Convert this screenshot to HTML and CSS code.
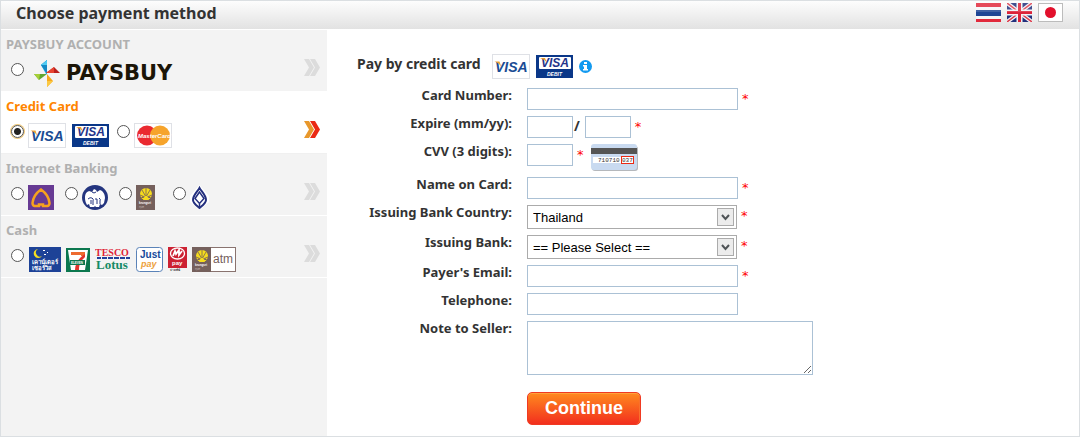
FILE: index.html
```html
<!DOCTYPE html>
<html lang="en">
<head>
  <meta charset="UTF-8">
  <title>Choose payment method</title>
  <link rel="stylesheet" href="styles.css">
</head>
<body>
  <!-- shared logos -->
  <svg class="defs" width="0" height="0" aria-hidden="true">
    <symbol id="visa" viewBox="0 0 38 25">
      <rect x=".5" y=".5" width="37" height="24" fill="#fff" stroke="#dfe1e6"/>
      <text x="3" y="18" class="visa-text" font-size="14" fill="#1a4c94">VISA</text>
      <path d="M2.500 7.500h5l2 6q-2-4.500-7-6z" fill="#eba131"/>
    </symbol>
    <symbol id="visa-debit" viewBox="0 0 37 23">
      <rect width="37" height="23" fill="#0a3788"/>
      <rect x="3" y="2" width="32" height="12" rx="1" fill="#fff"/>
      <text x="5" y="12" class="visa-text" font-size="12" fill="#24348a">VISA</text>
      <path d="M4 3h5l2 5q-2-3.500-7-5z" fill="#eba131"/>
      <text x="11" y="21" class="visa-text" font-size="5" fill="#fff">DEBIT</text>
    </symbol>
    <symbol id="krungsri" viewBox="0 0 19 25">
      <rect width="19" height="25" fill="#75605c"/>
      <circle cx="10" cy="9" r="6" fill="#f6dc1c"/>
      <path d="M10 3v8M6 5l4 7 4-7M4 10l5 2M16 10l-5 2" stroke="#75605c" stroke-width=".8" fill="none"/>
      <path d="M5 13l2-2 1 2zM15 13l-2-2-1 2z" fill="#75605c"/>
      <path d="M9 11h2l2 4H7z" fill="#f6dc1c"/>
      <text x="3" y="19" font-size="3" font-weight="bold" fill="#fff">krungsri</text>
      <text x="3" y="23" font-size="2" fill="#cbbfbb">กรุงศรี</text>
    </symbol>
    <symbol id="arrows" viewBox="0 0 16 17">
      <path class="arrow-back" d="M0 0h5l5 8.500-5 8.500H0l5-8.500z"/>
      <path class="arrow-front" d="M6 0h5l5 8.500-5 8.500H6l5-8.500z"/>
    </symbol>
    <symbol id="drop" viewBox="0 0 17 18">
      <rect x=".5" y=".5" width="16" height="17" fill="#ececec" stroke="#ababab"/>
      <path d="M5 7l3.500 4L12 7" fill="none" stroke="#4f5457" stroke-width="2"/>
    </symbol>
  </svg>

  <div class="page">
    <header class="header">
      <h1>Choose payment method</h1>
      <nav class="flags">
        <a href="#th" aria-label="Thai">
          <svg width="25" height="19" viewBox="0 0 25 19">
            <rect width="25" height="19" fill="#e12a3c"/>
            <rect y="4" width="25" height="12" fill="#f5f5f8"/>
            <rect y="7" width="25" height="6" fill="#1e4595"/>
            <rect width="25" height="9" fill="#fff" opacity=".15"/>
          </svg>
        </a>
        <a href="#en" aria-label="English">
          <svg width="25" height="19" viewBox="0 0 25 19">
            <rect width="25" height="19" fill="#23317c"/>
            <path d="M0 0l25 19M25 0L0 19" stroke="#f2f2f6" stroke-width="4"/>
            <path d="M0 0l25 19M25 0L0 19" stroke="#dd3c4c" stroke-width="1.500"/>
            <path d="M12.500 0v19M0 9.500h25" stroke="#f2f2f6" stroke-width="6"/>
            <path d="M12.500 0v19M0 9.500h25" stroke="#dc2338" stroke-width="3"/>
            <rect width="25" height="9" fill="#fff" opacity=".15"/>
          </svg>
        </a>
        <a href="#jp" aria-label="Japanese">
          <svg width="25" height="19" viewBox="0 0 25 19">
            <rect x=".5" y=".5" width="24" height="18" fill="#fff" stroke="#bcbcbc"/>
            <circle cx="12.500" cy="9.500" r="5.500" fill="#e2102c"/>
          </svg>
        </a>
      </nav>
    </header>

    <form class="content">
      <aside class="methods">
        <section class="method">
          <h2>PAYSBUY ACCOUNT</h2>
          <div class="options">
            <label class="option">
              <input type="radio" name="method" value="paysbuy" aria-label="PAYSBUY">
              <svg width="152" height="30" viewBox="0 0 152 30">
                <g transform="translate(3 0)">
                  <path d="M10 6l6-5v14h-1z" fill="#27b4e8"/>
                  <path d="M16 1v14l-6-9z" fill="#1488c4"/>
                  <path d="M10 6l6-5v5z" fill="#4fcaf2"/>
                  <path d="M15 14h14l-6-6z" fill="#b91f1d"/>
                  <path d="M15 14l8-6v6z" fill="#e8432f"/>
                  <path d="M3 15h13l-8 6z" fill="#5fa62f"/>
                  <path d="M3 15h6l-1 6z" fill="#a6cf38"/>
                  <path d="M16 15l6 7-6 6z" fill="#f6a81c"/>
                  <path d="M16 22h6l-6 6z" fill="#fbc841"/>
                </g>
                <text x="38" y="21" font-family="DejaVu Sans" font-size="21" font-weight="bold" fill="#1b1507">PAYSBUY</text>
              </svg>
            </label>
          </div>
          <svg class="arrows"><use href="#arrows"/></svg>
        </section>

        <section class="method active">
          <h2>Credit Card</h2>
          <div class="options">
            <label class="option">
              <input type="radio" name="method" value="visa" aria-label="Visa" checked>
              <svg width="38" height="25"><use href="#visa"/></svg>
              <svg class="debit" width="37" height="23"><use href="#visa-debit"/></svg>
            </label>
            <label class="option">
              <input type="radio" name="method" value="mastercard" aria-label="MasterCard">
              <svg width="38" height="25" viewBox="0 0 38 25">
                <rect x=".5" y=".5" width="37" height="24" fill="#fff" stroke="#dfe1e6"/>
                <circle cx="13" cy="12.500" r="10" fill="#ea2a31"/>
                <circle cx="26" cy="12.500" r="10" fill="#f6a42c"/>
                <text x="4" y="15" font-size="6" font-weight="bold" font-style="italic" fill="#fff">MasterCard</text>
              </svg>
            </label>
          </div>
          <svg class="arrows"><use href="#arrows"/></svg>
        </section>

        <section class="method">
          <h2>Internet Banking</h2>
          <div class="options banks">
            <label class="option">
              <input type="radio" name="method" value="scb" aria-label="Siam Commercial Bank">
              <svg width="26" height="25" viewBox="0 0 26 25">
                <rect width="26" height="25" fill="#673a93"/>
                <path d="M13 4.500C8 8 5 13 4.500 18q0 2.500 2 3H11v-1.500h4V21h4.500q2-.500 2-3C21 13 18 8 13 4.500z" fill="none" stroke="#f6a21e" stroke-width="2.500"/>
              </svg>
            </label>
            <label class="option">
              <input type="radio" name="method" value="ktb" aria-label="Krung Thai Bank">
              <svg width="26" height="25" viewBox="0 0 26 25">
                <ellipse cx="13" cy="12.500" rx="13" ry="12.500" fill="#24357f"/>
                <path d="M3 13c0-5 2-6 4-7l3 1 2-3 2 1 1 2 3-2c3 1 5 4 5 8l-1 5-2 2-2-1-1 3h-3l-1-1-1 1H8l-1-3-2 1c-1-2-2-4-2-7z" fill="#fff"/>
                <path d="M6 14q2-2 4-1t1 3v4M9 15v4M13 14h2v5M17 13q2 1 1 3v3M10 7l2 1 2-1" stroke="#24357f" stroke-width="1" fill="none"/>
              </svg>
            </label>
            <label class="option">
              <input type="radio" name="method" value="bay" aria-label="Krungsri">
              <svg width="19" height="25"><use href="#krungsri"/></svg>
            </label>
            <label class="option">
              <input type="radio" name="method" value="bbl" aria-label="Bangkok Bank">
              <svg width="19" height="25" viewBox="0 0 19 25">
                <path d="M9.500 0L0 11v6l9.500 8 9.500-8v-6z" fill="#fff"/>
                <path d="M9.500 3C8 6 3 10 3 15c0 3 3 5 6.500 8 3.500-3 6.500-5 6.500-8 0-5-5-9-6.500-12z" fill="none" stroke="#24307f" stroke-width="2"/>
                <path d="M9.500 7L5 13.500l4.500 5 4.500-5zM9.500 18v4" fill="none" stroke="#24307f" stroke-width="1.500"/>
              </svg>
            </label>
          </div>
          <svg class="arrows"><use href="#arrows"/></svg>
        </section>

        <section class="method">
          <h2>Cash</h2>
          <div class="options">
            <label class="option cash">
              <input type="radio" name="method" value="cash" aria-label="Cash">
              <svg width="32" height="25" viewBox="0 0 32 25">
                <rect width="32" height="25" fill="#1d4297"/>
                <path d="M9 2a4.500 4.500 0 1 0 4 7 4 4 0 0 1-4-7z" fill="#f8e01e"/>
                <path d="M14 3h2v1h-2zM15 7h2v1h-2zM18 5h1v1h-1z" fill="#fff"/>
                <text x="3" y="17" font-size="6" font-weight="bold" fill="#fff">เคาน์เตอร์</text>
                <text x="3" y="23" font-size="6" font-weight="bold" fill="#fff">เซอร์วิส</text>
              </svg>
              <svg width="24" height="25" viewBox="0 0 24 25">
                <rect y="1" width="24" height="24" fill="#0b774e"/>
                <path d="M2 3h20l-3 20H5z" fill="#fff"/>
                <path d="M5 5h14v4h-4V8H5z" fill="#ee6b31"/>
                <path d="M19 7v3c-3 3-6 6-6 13H9c0-5 2-9 6-13z" fill="#e2332d"/>
                <rect x="4" y="13" width="15" height="5" fill="#0b774e"/>
                <text x="5" y="17" font-size="3" font-weight="bold" fill="#fff">ELEVEN</text>
              </svg>
              <svg width="36" height="25" viewBox="0 0 36 25">
                <text x="0" y="9" font-family="Liberation Serif" font-size="10" font-weight="bold" fill="#df1f37">TESCO</text>
                <path d="M2 11h4m1 0h5m1 0h5m1 0h5m1 0h5m1 0h4" stroke="#23409a" stroke-width="2"/>
                <text x="1" y="22" font-family="Liberation Serif" font-size="13" font-weight="bold" fill="#168b67">Lotus</text>
              </svg>
              <svg width="27" height="25" viewBox="0 0 27 25">
                <rect x=".5" y=".5" width="26" height="24" rx="3" fill="#fff" stroke="#5b83b8"/>
                <text x="4" y="11" font-size="10" font-weight="bold" fill="#164a9b">Just</text>
                <text x="5" y="20" font-size="9" font-weight="bold" font-style="italic" fill="#eda13c">pay</text>
              </svg>
              <svg width="19" height="25" viewBox="0 0 19 25">
                <rect width="19" height="21" fill="#cc2132"/>
                <ellipse cx="9.500" cy="6.500" rx="7" ry="5.500" fill="none" stroke="#fff" stroke-width="1.300"/>
                <path d="M5 9l2-5 1 3 3-4v5l3-4" fill="none" stroke="#fff" stroke-width="1.800"/>
                <text x="4" y="18" font-size="6" font-weight="bold" fill="#fff">pay</text>
                <text x="2" y="24" font-size="3" font-weight="bold" fill="#333">จ่ายที่นี่</text>
              </svg>
              <svg width="44" height="25" viewBox="0 0 44 25">
                <rect x=".5" y=".5" width="43" height="24" fill="#fff" stroke="#89736f"/>
                <use href="#krungsri" width="19" height="25"/>
                <text x="21" y="16" font-size="12" fill="#75605c">atm</text>
              </svg>
            </label>
          </div>
          <svg class="arrows"><use href="#arrows"/></svg>
        </section>
      </aside>

      <main class="payment">
        <div class="pay-title">
          <h2>Pay by credit card</h2>
          <svg width="38" height="25"><use href="#visa"/></svg>
          <svg width="37" height="23"><use href="#visa-debit"/></svg>
          <svg width="13" height="13" viewBox="0 0 13 13">
            <circle cx="6.500" cy="6.500" r="6.500" fill="#139af0"/>
            <path d="M5 2h3v2H5zM4 5h4v4h1v1.500H4V9h1V6.500H4z" fill="#fff"/>
          </svg>
        </div>

        <div class="fields">
          <label for="card">Card Number:</label>
          <div class="field"><input type="text" id="card"><span class="req">*</span></div>

          <label for="month">Expire (mm/yy):</label>
          <div class="field">
            <input type="text" id="month" class="short"><span class="slash">/</span><input type="text" class="short" aria-label="Expire year"><span class="req">*</span>
          </div>

          <label for="cvv">CVV (3 digits):</label>
          <div class="field">
            <input type="text" id="cvv" class="short"><span class="req">*</span>
            <svg class="cvv-card" width="48" height="27" viewBox="0 0 48 27">
              <rect x="1" y="2" width="46" height="25" rx="3" fill="#b5b8bc"/>
              <rect width="46" height="26" rx="3" fill="#c9daf0"/>
              <rect y="4" width="46" height="6" fill="#555"/>
              <rect x="2" y="13" width="41" height="6" fill="#fff"/>
              <text x="7" y="18" font-family="Liberation Mono" font-size="6" fill="#333">710710</text>
              <rect x="30.500" y="12.500" width="12" height="7" fill="#fff" stroke="#ea2a14"/>
              <text x="31" y="18" font-family="Liberation Mono" font-size="6" fill="#333">037</text>
            </svg>
          </div>

          <label for="name">Name on Card:</label>
          <div class="field"><input type="text" id="name"><span class="req">*</span></div>

          <label for="country">Issuing Bank Country:</label>
          <div class="field">
            <div class="select">
              <select id="country"><option>Thailand</option></select>
              <svg width="17" height="18"><use href="#drop"/></svg>
            </div>
            <span class="req">*</span>
          </div>

          <label for="bank">Issuing Bank:</label>
          <div class="field">
            <div class="select">
              <select id="bank"><option>== Please Select ==</option></select>
              <svg width="17" height="18"><use href="#drop"/></svg>
            </div>
            <span class="req">*</span>
          </div>

          <label for="email">Payer's Email:</label>
          <div class="field"><input type="text" id="email"><span class="req">*</span></div>

          <label for="phone">Telephone:</label>
          <div class="field"><input type="text" id="phone"></div>

          <label for="note">Note to Seller:</label>
          <div class="field"><textarea id="note"></textarea></div>

          <button type="button" class="continue">Continue</button>
        </div>
      </main>
    </form>
  </div>
</body>
</html>
```

FILE: styles.css
```css
* {
  box-sizing: border-box;
}

body {
  margin: 0;
  font-family: "Noto Sans", sans-serif;
  font-size: 13px;
  color: #333;
  background: #fff;
}

h1, h2 {
  margin: 0;
}

svg {
  display: block;
  flex: none;
  font-family: "Liberation Sans", sans-serif;
}

.defs {
  position: absolute;
}

.visa-text {
  font-weight: bold;
  font-style: italic;
}

.page {
  display: flex;
  flex-direction: column;
  min-height: 100vh;
  border: 1px solid #dbdfe2;
}

.header {
  display: flex;
  justify-content: space-between;
  height: 29px;
  padding: 0 16px 0 15px;
  border-bottom: 1px solid #fff;
  background: linear-gradient(#fdfdfd, #e2e2e2);
}

.header h1 {
  font-size: 16px;
  line-height: 24px;
}

.flags {
  display: flex;
  gap: 6px;
  padding-top: 2px;
}

.content {
  display: flex;
  flex: 1;
}

/* left menu */
.methods {
  width: 326px;
  flex: none;
  background: #f3f3f3;
}

.method {
  position: relative;
  padding: 6px 5px 5px;
  border-bottom: 1px solid #fff;
}

.method h2 {
  margin-bottom: 9px;
  font-size: 13px;
  line-height: 16px;
  color: #b0b0b0;
}

.method.active {
  background: #fff;
  border-color: #f0f0f0;
}

.method.active h2 {
  color: #ff8500;
}

.options {
  display: flex;
  gap: 8px;
  padding-left: 5px;
}

.option {
  display: flex;
  align-items: center;
  gap: 4px;
  height: 25px;
}

.banks {
  gap: 0;
}

.banks .option {
  width: 54px;
}

.cash {
  gap: 5px;
}

.debit {
  margin-left: 2px;
}

input[type="radio"] {
  appearance: none;
  flex: none;
  width: 13px;
  height: 13px;
  margin: 0 0 8px;
  border: 1px solid #555;
  border-radius: 50%;
  background: #fff;
}

input[type="radio"]:checked {
  background: radial-gradient(#222 3px, #fff 4px);
  box-shadow: 0 0 0 1px #f0c878;
}

.arrows {
  position: absolute;
  right: 7px;
  top: 29px;
  width: 16px;
  height: 17px;
  fill: #dcdcdc;
}

.active .arrows {
  --back: #e8982c;
  fill: #ea2a14;
}

.arrow-back {
  fill: var(--back, #dcdcdc);
}

/* card form */
.payment {
  flex: 1;
  padding: 24px 0 10px;
}

.pay-title {
  display: flex;
  align-items: center;
  gap: 6px;
  height: 25px;
  margin-bottom: 9px;
  padding-left: 30px;
}

.pay-title h2 {
  margin: 0 5px 5px 0;
  font-size: 14px;
  line-height: 20px;
}

.fields {
  display: grid;
  grid-template-columns: 185px 1fr;
  gap: 6px 15px;
}

.fields label {
  font-weight: bold;
  line-height: 14px;
  text-align: right;
}

.field {
  display: flex;
  align-items: flex-start;
}

.field input,
.field textarea {
  width: 211px;
  height: 22px;
  margin: 0;
  padding: 2px 4px;
  border: 1px solid #abc1d5;
  background: #fff;
}

.field .short {
  width: 46px;
}

.field textarea {
  width: 286px;
  height: 54px;
}

.slash {
  padding: 0 5px 0 1px;
  font-size: 14px;
  font-weight: bold;
  line-height: 20px;
}

.req {
  padding-left: 4px;
  font-family: "DejaVu Sans", sans-serif;
  line-height: 22px;
  color: #f00;
}

.cvv-card {
  margin-left: 7px;
}

.select {
  position: relative;
}

.select select {
  appearance: none;
  display: block;
  width: 210px;
  height: 24px;
  padding: 0 24px 0 5px;
  border: 1px solid #ababab;
  border-radius: 0;
  font-family: "Liberation Sans", sans-serif;
  font-size: 13px;
  color: #000;
  background: #fff;
}

.select svg {
  position: absolute;
  top: 3px;
  right: 3px;
  pointer-events: none;
}

.continue {
  grid-column: 2;
  justify-self: start;
  height: 33px;
  margin-top: 11px;
  padding: 0 17px;
  border: 1px solid #f03a22;
  border-radius: 5px;
  font-family: "Liberation Sans", sans-serif;
  font-size: 18px;
  font-weight: bold;
  color: #fff;
  background: linear-gradient(#ff8a1f, #f22f1e);
  box-shadow: inset 0 1px #ffa23c, inset -1px 0 #f9702c;
}
```
